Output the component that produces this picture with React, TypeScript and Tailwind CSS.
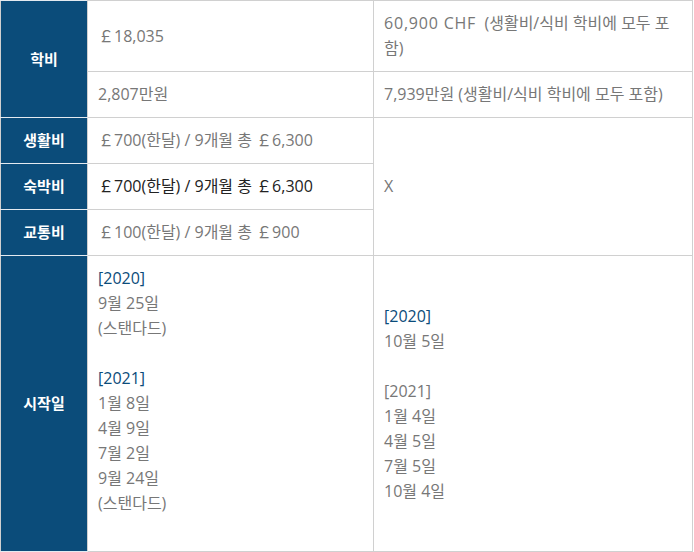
const font = {
  fontFamily: '"Open Sans", "Noto Sans CJK KR", sans-serif',
};

function Head({ children, rowSpan }: { children: React.ReactNode; rowSpan?: number }) {
  return (
    <th
      rowSpan={rowSpan}
      className="w-[86px] border border-x-[#d0d0d0] border-y-[#e4eaf0] bg-[#0b4c7a] text-center align-middle text-[15px] font-bold text-white"
    >
      {children}
    </th>
  );
}

function Cell({
  children,
  rowSpan,
  dark,
  className = "",
}: {
  children: React.ReactNode;
  rowSpan?: number;
  dark?: boolean;
  className?: string;
}) {
  return (
    <td
      rowSpan={rowSpan}
      className={`border border-[#d0d0d0] px-[10px] py-[10px] align-middle ${
        dark ? "text-[#222]" : "text-[#777]"
      } ${className}`}
    >
      {children}
    </td>
  );
}

export default function App() {
  return (
    <div className="bg-white" style={font}>
      <table className="w-[693px] table-fixed border-collapse text-[16px] leading-[25px]">
        <colgroup>
          <col className="w-[87px]" />
          <col className="w-[286px]" />
          <col />
        </colgroup>
        <tbody>
          <tr className="h-[71px]">
            <Head rowSpan={2}>학비</Head>
            <Cell>￡18,035</Cell>
            <Cell>
              <span className="tracking-[0.8px]">60,900 CHF</span>&nbsp; (생활비/식비 학비에 모두 포함)
            </Cell>
          </tr>
          <tr className="h-[46px]">
            <Cell>2,807만원</Cell>
            <Cell>7,939만원 (생활비/식비 학비에 모두 포함)</Cell>
          </tr>
          <tr className="h-[46px]">
            <Head>생활비</Head>
            <Cell>￡700(한달) / 9개월 총 ￡6,300</Cell>
            <Cell rowSpan={3}>X</Cell>
          </tr>
          <tr className="h-[46px]">
            <Head>숙박비</Head>
            <Cell dark>￡700(한달) / 9개월 총 ￡6,300</Cell>
          </tr>
          <tr className="h-[46px]">
            <Head>교통비</Head>
            <Cell>￡100(한달) / 9개월 총 ￡900</Cell>
          </tr>
          <tr>
            <Head>시작일</Head>
            <Cell>
              <span className="text-[#0b4c7a]">[2020]</span>
              <br />
              9월 25일
              <br />
              (스탠다드)
              <br />
              <br />
              <span className="text-[#0b4c7a]">[2021]</span>
              <br />
              1월 8일
              <br />
              4월 9일
              <br />
              7월 2일
              <br />
              9월 24일
              <br />
              (스탠다드)
              <br />
              &nbsp;
            </Cell>
            <Cell>
              <span className="text-[#0b4c7a]">[2020]</span>
              <br />
              10월 5일
              <br />
              <br />
              [2021]
              <br />
              1월 4일
              <br />
              4월 5일
              <br />
              7월 5일
              <br />
              10월 4일
            </Cell>
          </tr>
        </tbody>
      </table>
    </div>
  );
}
